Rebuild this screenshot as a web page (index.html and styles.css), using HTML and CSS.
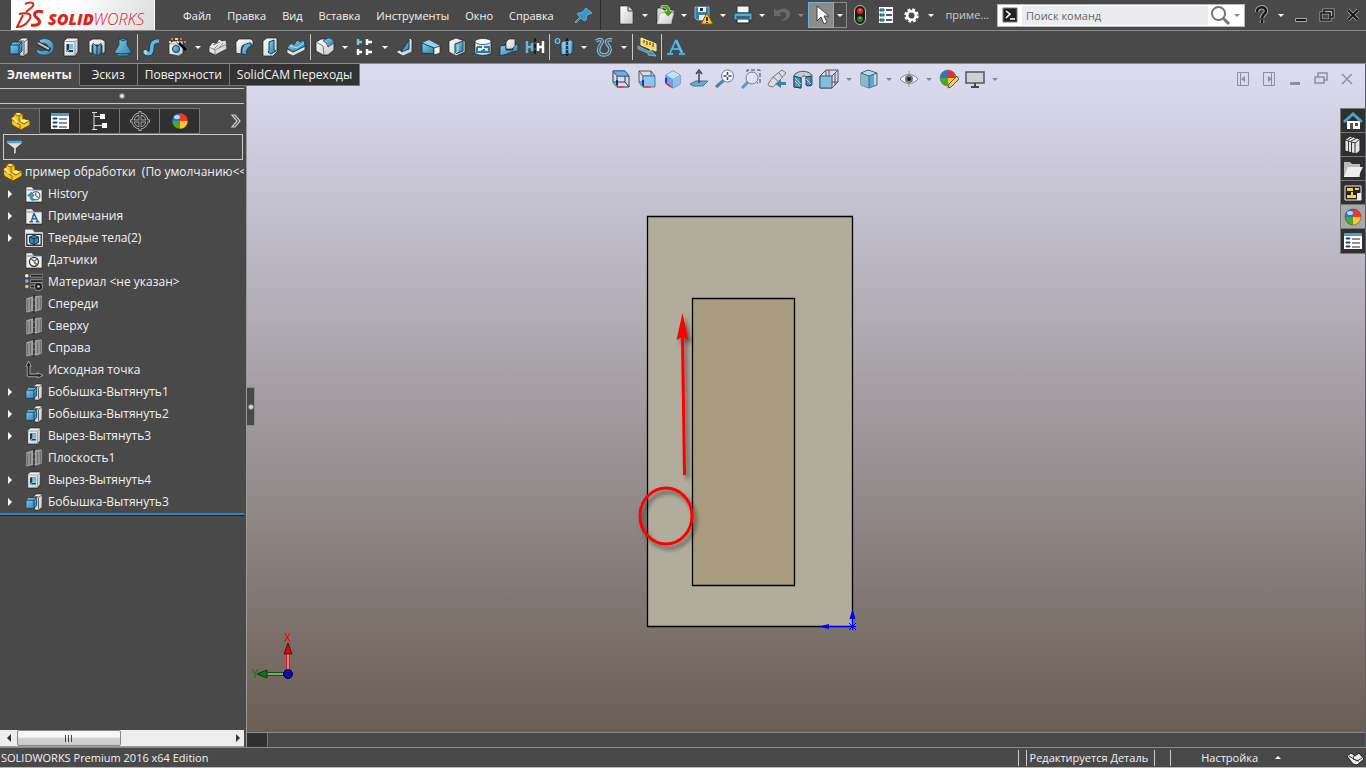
FILE: index.html
```html
<!DOCTYPE html>
<html lang="ru">
<head>
<meta charset="utf-8">
<title>SOLIDWORKS Premium 2016 x64 Edition</title>
<link rel="stylesheet" href="styles.css">
</head>
<body>
<svg class="sprite" aria-hidden="true">
<defs>
<linearGradient id="gb" x1="0" y1="0" x2="1" y2="1"><stop offset="0" stop-color="#8fd0ee"/><stop offset="1" stop-color="#2c7ba6"/></linearGradient>
<linearGradient id="gw" x1="0" y1="0" x2="1" y2="1"><stop offset="0" stop-color="#fff"/><stop offset="1" stop-color="#c4c8ca"/></linearGradient>
</defs>
<symbol id="boss" viewBox="0 0 20 20"><path d="M9 4l4-3h5l1 1v14l-4 3h-4z" fill="url(#gw)" stroke="#222" stroke-width=".7"/><path d="M15 5v13M15 5l4-3M9 4h6" stroke="#555" fill="none"/><path d="M1 8l3-3h9v9l-3 3H1z" fill="url(#gb)" stroke="#123f58"/><path d="M1 8h9v9M10 8l3-3" fill="none" stroke="#123f58"/></symbol>
<symbol id="revolve" viewBox="0 0 20 20"><path d="M4 3c8-4 15 1 15 7 0 7-9 11-17 6l-1-4c6 3 11 2 12-2 0-3-4-5-8-3z" fill="url(#gb)" stroke="#123f58" stroke-width=".8"/><path d="M3 6l12 7" stroke="#222" stroke-width="4"/><path d="M3 6l11 6" stroke="#bbb" stroke-width="2"/></symbol>
<symbol id="cut" viewBox="0 0 20 20"><path d="M3 4l3-3h11v14l-3 4H3z" fill="url(#gw)" stroke="#222" stroke-width=".8"/><path d="M14 5v13M14 5l3-3M3 4.500h11" stroke="#999" fill="none"/><path d="M5.500 7h6.500v8H5.500z" fill="#143e55"/><path d="M8 7h4v6H8z" fill="#74bfe2"/><path d="M5.500 15l3-2.500H12" stroke="#bde2f3" fill="none"/></symbol>
<symbol id="cutrev" viewBox="0 0 20 20"><path d="M2 4l4-2h8l4 2v11l-3 2v-9H5v9l-3-2z" fill="url(#gw)" stroke="#222" stroke-width=".8"/><path d="M6 6l4 4v9l-4-3zM14 6l-4 4v9l4-3z" fill="url(#gb)" stroke="#123f58" stroke-width=".7"/></symbol>
<symbol id="loft" viewBox="0 0 20 20"><path d="M6 2h8v6l5 8-5 3H6l-5-3 5-8z" fill="url(#gb)" stroke="#123f58" stroke-width=".8"/><path d="M6 2l4 2 4-2M1 16l9 1 9-1" stroke="#0e405b" fill="none"/></symbol>
<symbol id="sweep" viewBox="0 0 20 20"><path d="M3 16c8 2 6-2 7-7 0-4 4-5 7-5" fill="none" stroke="#174863" stroke-width="5.500"/><path d="M3 16c8 2 6-2 7-7 0-4 4-5 7-5" fill="none" stroke="#66b6dc" stroke-width="3.500"/><circle cx="3.500" cy="15" r="2" fill="#a6dcf4"/></symbol>
<symbol id="wizard" viewBox="0 0 20 20"><path d="M1 7l4-3h10v12l-4 3-10-2z" fill="url(#gw)" stroke="#222" stroke-width=".7"/><path d="M1 7h10v12M11 7l4-3" fill="none" stroke="#999" stroke-width=".7"/><circle cx="8" cy="12" r="3.500" fill="url(#gb)" stroke="#135"/><path d="M9 4l9 9" stroke="#000" stroke-width="2.500"/><path d="M9 4l2 2" stroke="#fff" stroke-width="2"/><path d="M3 1h2v2H3zM12 1h2v2h-2zM16 4h2v2h-2z" fill="#e67630"/><path d="M7 1h3v2H7zM1 4h2v2H1z" fill="#ffd864"/></symbol>
<symbol id="bumpw" viewBox="0 0 20 20"><path d="M1 10l4-5 3 2 3-5 3 2 4-1 1 9-12 6-6-3z" fill="url(#gw)" stroke="#222" stroke-width=".7"/><path d="M1 10l6 3 12-6M7 13v5M5 8l7-3M5 13l5-5M11 11l4-5" stroke="#888" fill="none"/></symbol>
<symbol id="bumpb" viewBox="0 0 20 20"><path d="M1 12l6 3 12-6v4L7 19l-6-3z" fill="url(#gw)" stroke="#222" stroke-width=".7"/><path d="M1 11l4-5 3 2 3-5 3 2 4-2 1 6-12 6z" fill="url(#gb)" stroke="#123f58" stroke-width=".8"/><path d="M4 9l7 2 7-5" stroke="#b5e4f8" fill="none"/></symbol>
<symbol id="cutsweep" viewBox="0 0 20 20"><path d="M2 5l3-3h12l2 2v4H9c-2 2-2 5-2 9l-5-1z" fill="url(#gw)" stroke="#222" stroke-width=".7"/><path d="M8 17C7 10 10 6 17 6v4c-4 0-5 4-4 8z" fill="url(#gb)" stroke="#123f58"/></symbol>
<symbol id="cutloft" viewBox="0 0 20 20"><path d="M3 4l4-3h10v14l-4 4H3z" fill="url(#gw)" stroke="#222" stroke-width=".7"/><path d="M9 5l5-2v10l2 1-5 3-3-2 1-1z" fill="url(#gb)" stroke="#123f58"/></symbol>
<symbol id="fillet" viewBox="0 0 20 20"><path d="M1 5l5-3h10l3 3v8l-6 5H8l-7-4z" fill="url(#gw)" stroke="#222" stroke-width=".8"/><path d="M8 4l5-3c4 0 6 3 6 5l-6 4c-1-4-3-5-5-6z" fill="url(#gb)" stroke="#123f58" stroke-width=".7"/><path d="M1 5l7 4 1 9" stroke="#777" fill="none"/></symbol>
<symbol id="pattern" viewBox="0 0 20 20"><path d="M3 2v6M3 5h4" stroke="#78bfdf" stroke-width="2.500"/><path d="M12 2v6M12 5h5M3 12v6M3 15h4M12 12v6M12 15h5" stroke="#fff" stroke-width="2.500"/></symbol>
<symbol id="rib" viewBox="0 0 20 20"><path d="M15 1l2 2v12L8 19l-7-4 3-2 3 1z" fill="url(#gw)" stroke="#222" stroke-width=".7"/><path d="M14 3v9l-8 3z" fill="url(#gb)" stroke="#123f58"/></symbol>
<symbol id="draft" viewBox="0 0 20 20"><path d="M1 6l7-3 11 6-6 2H1z" fill="#9ad2ec"/><path d="M1 6l12 5v6L1 16z" fill="url(#gb)" stroke="#123f58"/><path d="M13 11l6-2v7l-6 2z" fill="#f3f3f3" stroke="#222" stroke-width=".7"/></symbol>
<symbol id="shell" viewBox="0 0 20 20"><path d="M2 4l7-3 9 3v11l-9 4-7-4z" fill="url(#gw)" stroke="#222" stroke-width=".7"/><path d="M8 7l8-3v10l-8 3z" fill="url(#gb)" stroke="#123f58"/><path d="M11 8v6l-3 3" stroke="#bbe4f7" fill="none"/></symbol>
<symbol id="wrap" viewBox="0 0 20 20"><path d="M2 5v11c3 3 13 3 16 0V5z" fill="url(#gw)" stroke="#222" stroke-width=".7"/><ellipse cx="10" cy="4.500" rx="8" ry="3" fill="#fff" stroke="#333" stroke-width=".8"/><path d="M4 10h5M4 10v5h5v-2M11 10h5v5h-5v-3" fill="none" stroke="#257caa" stroke-width="2"/></symbol>
<symbol id="intersect" viewBox="0 0 20 20"><path d="M1 9l6-1v5h7V8l5-1v7l-6 1-5 2-7 2z" fill="url(#gb)" stroke="#123f58"/><path d="M7 5l3-3h6v7l-3 3H7z" fill="url(#gw)" stroke="#222" stroke-width=".7"/></symbol>
<symbol id="mirror" viewBox="0 0 20 20"><path d="M2 4v12M2 10h5M7 6v8" stroke="#66b6dc" stroke-width="2.500"/><path d="M18 4v12M18 10h-5M13 6v8" stroke="#fff" stroke-width="2.500"/><path d="M10 1v18" stroke="#111" stroke-width="1.500" stroke-dasharray="4 2"/></symbol>
<symbol id="refgeo" viewBox="0 0 20 20"><circle cx="3.500" cy="4" r="2.500" fill="#276d94" stroke="#9bd0e8"/><path d="M7 5l12-2v13L7 18z" fill="url(#gb)" stroke="#123f58"/><path d="M10 4v13M16 3v14" stroke="#a6dcf4"/><path d="M13 1v18" stroke="#111" stroke-width="1.500" stroke-dasharray="3 1"/></symbol>
<symbol id="curve" viewBox="0 0 20 20"><path d="M2 4c5-3 8-1 5 3-4 5-3 11 3 11s8-6 4-10c-3-4-1-6 4-5" stroke="#a5bac5" stroke-width="3.500" fill="none"/><path d="M2 4c5-3 8-1 5 3-4 5-3 11 3 11s8-6 4-10c-3-4-1-6 4-5" stroke="#246b91" stroke-width="1.500" fill="none"/></symbol>
<symbol id="ruler" viewBox="0 0 20 20"><path d="M4 1l15 6v7L4 8z" fill="#f9d65a" stroke="#fff1b1"/><path d="M7 3v3M10 4v4M13 5v3M16 6v4" stroke="#443a10"/><path d="M1 9l12 6v-3l6 7-8-1v-2L1 12z" fill="#3b8fb9" stroke="#bdd8e5" stroke-width=".6"/></symbol>
<symbol id="letter" viewBox="0 0 20 20"><path d="M10 2l6 14M10 2L4 16M6 12h7M1 17h7M12 17h7" stroke="#225d7d" stroke-width="3.500" fill="none"/><path d="M10 3l6 13" stroke="#6ab9de" stroke-width="2.500"/><path d="M10 3L4 16M6 12h7M1 17h6M13 17h6" stroke="#6ab9de" stroke-width="1.500" fill="none"/></symbol>
<symbol id="pin" viewBox="0 0 20 20"><path d="M12 3l6 5-2 1-3 1-1 5-2 1-3-3-5 5-1-1 5-5-3-3 2-1 4-1 2-3z" fill="#3795c5" stroke="#7dc2e3" stroke-width=".7"/></symbol>
<symbol id="new" viewBox="0 0 20 20"><path d="M4 1h8l5 5v13H4z" fill="url(#gw)" stroke="#222" stroke-width=".6"/><path d="M12 1v5h5" fill="#ddd" stroke="#333"/></symbol>
<symbol id="open" viewBox="0 0 20 20"><path d="M2 3h5l2 2h8v14H2z" fill="#d9d9d9" stroke="#222" stroke-width=".7"/><path d="M5 8h14l-3 11H2z" fill="url(#gw)" stroke="#888" stroke-width=".5"/><path d="M6 1c5-2 9 0 9 5h4l-6 6-5-6h4c0-2-2-4-6-3z" fill="#46a316" stroke="#eaffdf" stroke-width=".6"/></symbol>
<symbol id="save" viewBox="0 0 20 20"><path d="M1 2h14v13H3l-2-2z" fill="#367fa8" stroke="#9dd3ee" stroke-width=".7"/><path d="M4 2h8v5H4zM5 10h7v5H5z" fill="#eee"/><path d="M6 3v3h3V3z" fill="#333"/><path d="M13 8l6 11H7z" fill="#ffc23d" stroke="#875100"/><path d="M13 12v4m0 1v1" stroke="#000" stroke-width="1.500"/></symbol>
<symbol id="print" viewBox="0 0 20 20"><path d="M4 1h12v7H4z" fill="#f5f5f5" stroke="#333"/><path d="M1 8h18v7H1z" fill="#58aad0" stroke="#0f4967"/><path d="M3 12h14M4 14h12v4H4z" fill="#fff" stroke="#123"/></symbol>
<symbol id="undo" viewBox="0 0 20 20"><path d="M2 3v8h8L7 8c5-2 8 0 7 3-1 2-3 4-5 5 6 0 9-3 9-7 0-5-7-8-13-3z" fill="#696969"/></symbol>
<symbol id="arrow" viewBox="0 0 20 20"><path d="M6 1v15l4-4 3 7 3-2-3-6h5z" fill="#fff" stroke="#333" stroke-width=".9"/></symbol>
<symbol id="traffic" viewBox="0 0 20 20"><rect x="4.500" y=".5" width="11" height="19" rx="5.500" fill="#1d1d1d" stroke="#bbb"/><circle cx="10" cy="6" r="3" fill="#e52a11"/><circle cx="10" cy="14" r="3" fill="#238323"/><path d="M9 5h2M9 13h2" stroke="#ffb09b"/></symbol>
<symbol id="list" viewBox="0 0 20 20"><path d="M3 2h14v16H3z" fill="#fff"/><path d="M4 4h4v2H4zM4 9h4v2H4zM4 14h4v2H4z" fill="#5badd2" stroke="#145474"/><path d="M10 5h6M10 10h6M10 15h6" stroke="#222" stroke-width="1.500"/></symbol>
<symbol id="gear" viewBox="0 0 20 20"><circle cx="10" cy="10" r="7" fill="none" stroke="#fff" stroke-width="3" stroke-dasharray="3.300 2.200"/><circle cx="10" cy="10" r="5" fill="none" stroke="#fff" stroke-width="3"/></symbol>
<symbol id="terminal" viewBox="0 0 20 20"><path d="M3 3h14v14H3z" fill="#222" stroke="#777" stroke-width="1"/><path d="M6 6l4 3-4 4M10 14h5" stroke="#fff" stroke-width="1.500" fill="none"/></symbol>
<symbol id="find" viewBox="0 0 20 20"><circle cx="8.500" cy="8.500" r="6.500" fill="#fff" stroke="#757575" stroke-width="2"/><path d="M13 13l6 6" stroke="#757575" stroke-width="3"/></symbol>
<symbol id="help" viewBox="0 0 20 20"><path d="M6 7c0-6 9-6 9-1 0 3-4 3-4 7M11 15v3" stroke="#aaa" stroke-width="4.500" fill="none"/><path d="M6 7c0-6 9-6 9-1 0 3-4 3-4 7M11 15v3" stroke="#161616" stroke-width="2.500" fill="none"/></symbol>
<symbol id="min" viewBox="0 0 20 20"><path d="M4.500 13.500h11v3h-11z" fill="#161616" stroke="#aaa"/></symbol>
<symbol id="restore" viewBox="0 0 20 20"><path d="M7 8V5h9v7h-3M4 8h9v7H4z" fill="none" stroke="#aaa" stroke-width="3"/><path d="M7 8V5h9v7h-3M4 8h9v7H4z" fill="none" stroke="#161616" stroke-width="1.500"/></symbol>
<symbol id="close" viewBox="0 0 20 20"><path d="M5 5l10 10M15 5L5 15" stroke="#aaa" stroke-width="3.500"/><path d="M5 5l10 10M15 5L5 15" stroke="#161616" stroke-width="2"/></symbol>
<symbol id="boxtop" viewBox="0 0 20 20"><path d="M2 2h12l4 5H6zM2 2v11l4 5V7M6 18h12V7M14 2v11H2M14 13l4 5" fill="none" stroke="#33383d"/><path d="M2 2h12l4 5H6z" fill="#72aee6" stroke="#326ea0"/><path d="M6 18v-7" stroke="#00f" stroke-width="1.500"/><path d="M6 18h7" stroke="#f33" stroke-width="1.500"/><path d="M6 18l-4-5" stroke="#29c738" stroke-width="1.500"/></symbol>
<symbol id="boxfront" viewBox="0 0 20 20"><path d="M2 2h12l4 5H6zM2 2v11l4 5V7M14 2v11H2" fill="none" stroke="#555"/><path d="M6 7h12v11H6z" fill="#91c3ef" stroke="#447eb0"/><path d="M6 18v-7" stroke="#00f" stroke-width="1.500"/><path d="M6 18h8" stroke="#f33" stroke-width="1.500"/><path d="M6 18l-4-5" stroke="#29c738" stroke-width="1.500"/></symbol>
<symbol id="iso" viewBox="0 0 20 20"><path d="M10 2l7 4v9l-7 4-7-4V6z" fill="#68a5df" stroke="#3979b5"/><path d="M3 6l7-4 7 4-7 4z" fill="#c4e2f8"/><path d="M10 10l7-4v9l-7 4z" fill="#91bfe9"/><path d="M3 14V9" stroke="#20f" stroke-width="1.500"/><path d="M3 14l5 4" stroke="#f22" stroke-width="1.500"/></symbol>
<symbol id="normal" viewBox="0 0 20 20"><path d="M1 15l6-3h12l-5 5H4z" fill="#69acd0" stroke="#39779b"/><path d="M10 14V3M7 5l3-4 3 4" fill="none" stroke="#444" stroke-width="1.500"/></symbol>
<symbol id="zoomfit" viewBox="0 0 20 20"><path d="M1 18l8-7" stroke="#4e85a7" stroke-width="3"/><circle cx="12.500" cy="7" r="6" fill="#eef4ff" stroke="#767b83"/><path d="M12.500 3v3M12.500 8v3M8.500 7h3M13.500 7h3" stroke="#444" stroke-width="1.500"/></symbol>
<symbol id="zoomarea" viewBox="0 0 20 20"><path d="M6 3V1h13v13h-3" fill="none" stroke="#444" stroke-dasharray="4 2"/><path d="M1 19l7-7" stroke="#5a9abb" stroke-width="3"/><circle cx="11" cy="9" r="6" fill="#dbe8f4" stroke="#767b83"/></symbol>
<symbol id="prev" viewBox="0 0 20 20"><path d="M1 15L6 8l9-7 4 3-7 8-6 6-4-1z" fill="#ddd" stroke="#777"/><path d="M6 8l5 4M12 4l3 4" stroke="#777"/><path d="M19 13h-5v-3l-6 5 6 4v-3h5z" fill="#3986ad"/></symbol>
<symbol id="section" viewBox="0 0 20 20"><path d="M1 6c5-5 13-5 18 0v10l-5 1V8c-3-2-5-1-6 1v10l-7-1z" fill="#c2cbd2" stroke="#555"/><path d="M1 7l7 2v10l-7-1zM13 8l5-1v10l-5-1z" fill="#4b94b9" stroke="#245"/><path d="M2 12l5 5M2 9l6 6M13 10l5 5" stroke="#abd7ee"/></symbol>
<symbol id="orient" viewBox="0 0 20 20"><path d="M1 7l6-6h12v12l-6 6H1zM7 1v12h12M13 7l6-6M10 1v6M16 4v12" fill="none" stroke="#555"/><path d="M1 7h12v12H1z" fill="#85bddb" stroke="#365f75"/></symbol>
<symbol id="shade" viewBox="0 0 20 20"><path d="M2 4l7-3 9 3v12l-8 3-8-3z" fill="#badae9" stroke="#426576"/><path d="M2 4l8 3v12l-8-3z" fill="#89b9cf"/><path d="M10 7l5-2v12l-5 2z" fill="#60a5c9"/><path d="M2 4l8 3 8-3M10 7v12" fill="none" stroke="#426576"/></symbol>
<symbol id="eye" viewBox="0 0 20 20"><path d="M1 10c5-6 13-6 18 0-5 6-13 6-18 0z" fill="#eef0f5" stroke="#888"/><circle cx="10" cy="10" r="4" fill="#70757a"/><path d="M10 2v16" stroke="#999"/><circle cx="10" cy="10" r="2" fill="#222"/></symbol>
<symbol id="ball" viewBox="0 0 20 20"><path d="M10 10V2a8 8 0 0 0-8 8z" fill="#2976cf"/><path d="M10 10h8a8 8 0 0 0-8-8z" fill="#f03a25"/><path d="M10 10H2a8 8 0 0 0 8 8z" fill="#4aa92b"/><path d="M10 18a8 8 0 0 0 8-8h-8z" fill="#ffc72c"/><circle cx="10" cy="10" r="8" fill="none" stroke="#222" stroke-opacity=".4"/><ellipse cx="7" cy="6" rx="3" ry="2" fill="#fff" fill-opacity=".7"/></symbol>
<symbol id="ballpen" viewBox="0 0 20 20"><path d="M9 9V1a8 8 0 0 0-8 8z" fill="#2976cf"/><path d="M9 9h8a8 8 0 0 0-8-8z" fill="#d63431"/><path d="M9 9H1a8 8 0 0 0 8 8z" fill="#4aa92b"/><path d="M9 17a8 8 0 0 0 8-8H9z" fill="#ffc72c"/><circle cx="9" cy="9" r="8" fill="none" stroke="#666" stroke-opacity=".5"/><path d="M9 19l1-4 8-8 2 3-8 8z" fill="#ead073" stroke="#6a5430"/></symbol>
<symbol id="monitor" viewBox="0 0 20 20"><path d="M1 3h18v11H1z" fill="#cfcfd6" stroke="#555" stroke-width="1.500"/><path d="M10 14v3M6 18h8" stroke="#444" stroke-width="2"/></symbol>
<symbol id="part" viewBox="0 0 20 20"><path d="M1 7l3-2V3l4-2 5 2v5l2 1 3-1 2 2v4l-9 5-9-5z" fill="#f5c52f" stroke="#634400"/><path d="M4 3l5 2 4-2M9 5v5l5 3 5-3M1 8l9 6v5" stroke="#8a6500" fill="none"/><path d="M5 3l3-1 3 1-2 1zM10 10l4-2 4 2-4 2zM2 7l2-1 4 5-2 1z" fill="#ffe989"/></symbol>
<symbol id="props" viewBox="0 0 20 20"><path d="M1 2h18v16H1z" fill="#fff"/><path d="M1 2h18v3H1z" fill="#4a9fc7"/><path d="M3 7h4v1H3zM3 11h4v1H3zM3 15h4v1H3z" stroke="#1a5575"/><path d="M9 8h8M9 12h8M9 16h8" stroke="#222"/></symbol>
<symbol id="config" viewBox="0 0 20 20"><path d="M4 1v17M4 5.500h7M4 14.500h8M2 1.500h5M2 18.500h5" stroke="#ddd" fill="none"/><path d="M10 3h5v5h-5zM12 12h5v5h-5z" fill="#fff"/></symbol>
<symbol id="target" viewBox="0 0 20 20"><circle cx="10" cy="10" r="7" fill="none" stroke="#aaa" stroke-width="3"/><path d="M10 0v20M0 10h20" stroke="#aaa" stroke-width="3"/><circle cx="10" cy="10" r="7" fill="none" stroke="#222" stroke-width="1.200"/><path d="M10 1v18M1 10h18" stroke="#222" stroke-width="1.200"/></symbol>
<symbol id="chev" viewBox="0 0 20 20"><path d="M6 4h3l5 6-5 6H6l5-6z" stroke="#ccc" stroke-width="1.200" fill="none"/></symbol>
<symbol id="funnel" viewBox="0 0 20 20"><path d="M1 2h18v3l-7 6v5l-3 3v-8L1 5z" fill="#ddd" stroke="#222" stroke-width=".8"/><path d="M1 2h18v3H1z" fill="#4ca8d3"/></symbol>
<symbol id="folder" viewBox="0 0 20 20"><path d="M1 2h7l2 3h9v14H1z" fill="#ededed" stroke="#222" stroke-width=".8"/><path d="M2 5.500h16" stroke="#777"/></symbol>
<symbol id="history" viewBox="0 0 20 20"><use href="#folder"/><circle cx="12" cy="12" r="4.500" fill="none" stroke="#333"/><path d="M12 9v3l3 2" stroke="#333" fill="none"/><path d="M10 17c-4 0-5-2-4-5H3l4-4 3 4H8" stroke="#2577a0" fill="#3c9bc9"/></symbol>
<symbol id="notes" viewBox="0 0 20 20"><use href="#folder"/><path d="M10 7l4 9M10 7l-3 9M8 13h4M5 16.500h4M12 16.500h4" stroke="#206d96" stroke-width="1.700" fill="none"/></symbol>
<symbol id="bodies" viewBox="0 0 20 20"><path d="M.5 1h8l2 3h9v15.500H.5z" fill="#eee" stroke="#ddd"/><path d="M2 6h16v12H2z" fill="#e8e8e8" stroke="#333" stroke-width="1.500"/><path d="M10 7l5 2v6l-5 2.500L5 15V9z" fill="#3388b0" stroke="#124"/><path d="M5 9l5 2 5-2M10 11v6" stroke="#124" fill="none"/></symbol>
<symbol id="sensor" viewBox="0 0 20 20"><use href="#folder"/><circle cx="10" cy="12" r="5" fill="#fff" stroke="#333" stroke-width="1.500"/><path d="M7 9l3 2M10 12l3-3" stroke="#287ead" stroke-width="1.500"/><path d="M10 12l3 3" stroke="#e44724" stroke-width="2"/></symbol>
<symbol id="material" viewBox="0 0 20 20"><path d="M6 1.500h14v3H6zM6 7.500h14v3H6zM6 13.500h8v3H6z" fill="#242424" stroke="#aaa" stroke-width=".8"/><circle cx="2" cy="3" r="2" fill="#eee"/><circle cx="2" cy="9" r="2" fill="#63bde5"/><circle cx="2" cy="15" r="2" fill="#f7c430"/><circle cx="15" cy="15" r="4.500" fill="#222" stroke="#bbb" stroke-width=".8"/><circle cx="15" cy="15" r="1.500" fill="#ccc"/></symbol>
<symbol id="plane" viewBox="0 0 20 20"><path d="M2 4l7-2v15l-7 2zM11 2l7-1v15l-7 2z" fill="#999" stroke="#bbb" stroke-width=".8"/><path d="M3 5v13M17 2v14M6 4v13M14 3v13" stroke="#555" stroke-width=".8"/><path d="M10 0v20" stroke="#222" stroke-width="1.500" stroke-dasharray="5 1"/></symbol>
<symbol id="origin" viewBox="0 0 20 20"><path d="M4 17V5M3 16h12" stroke="#aaa" stroke-width="4"/><path d="M4 0l3 6H1zM20 16l-6-3v6z" fill="#222" stroke="#aaa"/><path d="M4 17V5M3 16h12" stroke="#222" stroke-width="2"/></symbol>
<symbol id="home" viewBox="0 0 20 20"><path d="M4 10h13v8H4z" fill="#fff"/><path d="M1 11l9-8 9 8" fill="none" stroke="#49a5d0" stroke-width="3"/><path d="M7 12h3v6H7zM12 12h3v3h-3z" fill="#555"/></symbol>
<symbol id="books" viewBox="0 0 20 20"><path d="M2 5l5-4 10 3v12l-4 3-11-3z" fill="#e6e6e6" stroke="#222"/><path d="M2 5l10 3 5-4M5.500 6v11M8.500 7v11M12 8v11M5 5l5-3M8 6l6-3" fill="none" stroke="#333"/></symbol>
<symbol id="dir" viewBox="0 0 20 20"><path d="M1 3h6l2 2h8v13H1z" fill="#bbb"/><path d="M5 8h15l-5 10H1z" fill="#eee"/></symbol>
<symbol id="palette" viewBox="0 0 20 20"><path d="M2 3h16v14H2z" fill="#222" stroke="#eee"/><path d="M4 5h6v3H4zM12 5h4v2h-4zM8 9h2v3H8zM4 12h9v3H4z" fill="#f8cf45"/><path d="M14 10h4v7h-4z" fill="#eee"/></symbol>
<symbol id="paneleft" viewBox="0 0 20 20"><path d="M4.500 3.500h11v13h-11zM7.500 3.500v13" fill="none" stroke="#8f8f9d"/><path d="M12 7v6l-4-3z" fill="#8f8f9d"/></symbol>
<symbol id="paneright" viewBox="0 0 20 20"><path d="M4.500 3.500h11v13h-11zM12.500 3.500v13" fill="none" stroke="#8f8f9d"/><path d="M9 7v6l4-3z" fill="#8f8f9d"/></symbol>
<symbol id="dmin" viewBox="0 0 20 20"><path d="M5 13h10v3H5z" fill="#8f8f9d"/></symbol>
<symbol id="drestore" viewBox="0 0 20 20"><path d="M7 8V4h9v7h-3M4 8h9v6H4z" fill="none" stroke="#8f8f9d" stroke-width="1.500"/></symbol>
<symbol id="dclose" viewBox="0 0 20 20"><path d="M5 5l10 10M15 5L5 15" stroke="#8f8f9d" stroke-width="1.500"/></symbol>
<symbol id="tags" viewBox="0 0 20 20"><path d="M2 8l4-3 4 3 4-3 5 6-7 6-4-1z" fill="#eee" stroke="#222"/><path d="M4 8l8 5 5-3M9 8l-1 3 6 2" stroke="#333" fill="none"/></symbol>
</svg>

<div class="app">
<header class="title">
  <div class="logo">
    <svg class="ds" viewBox="0 0 30 28" aria-hidden="true"><path d="M9 3c6-3 11-1 7 3L10 11M3 13c9-2 14 0 10 6-3 5-7 7-12 7l6-12" fill="none" stroke="#dc2419" stroke-width="2"/><path d="M27 11c-6-2-10 1-8 4l4 4c2 4-2 6-8 5" fill="none" stroke="#dc2419" stroke-width="3"/></svg>
    <span class="brand"><b>SOLID</b>WORKS</span>
  </div>
  <nav class="menu"><button>Файл</button><button>Правка</button><button>Вид</button><button>Вставка</button><button>Инструменты</button><button>Окно</button><button>Справка</button></nav>
  <button class="pin" aria-label="Закрепить"><svg class="ic"><use href="#pin"/></svg></button>
  <div class="quick">
    <button class="t" aria-label="Создать"><svg class="ic"><use href="#new"/></svg></button><button class="c" aria-label="Варианты создания"></button>
    <button class="t" aria-label="Открыть"><svg class="ic"><use href="#open"/></svg></button><button class="c" aria-label="Варианты открытия"></button>
    <button class="t" aria-label="Сохранить"><svg class="ic"><use href="#save"/></svg></button><button class="c" aria-label="Варианты сохранения"></button>
    <button class="t" aria-label="Печать"><svg class="ic"><use href="#print"/></svg></button><button class="c" aria-label="Варианты печати"></button>
    <button class="t" aria-label="Отменить"><svg class="ic"><use href="#undo"/></svg></button><button class="c dim" aria-label="Варианты отмены"></button>
    <button class="t sel" aria-label="Выбрать"><svg class="ic"><use href="#arrow"/></svg></button><button class="c selc" aria-label="Варианты выбора"></button>
    <button class="t" aria-label="Перестроить"><svg class="ic"><use href="#traffic"/></svg></button>
    <button class="t" aria-label="Свойства файла"><svg class="ic"><use href="#list"/></svg></button>
    <button class="t" aria-label="Параметры"><svg class="ic gear"><use href="#gear"/></svg></button><button class="c" aria-label="Настройка параметров"></button>
  </div>
  <span class="doc">приме...</span>
  <form class="search">
    <svg class="ic"><use href="#terminal"/></svg>
    <input type="text" placeholder="Поиск команд" aria-label="Поиск команд">
    <button type="button" class="find" aria-label="Найти"><svg class="ic"><use href="#find"/></svg></button><button type="button" class="c gray" aria-label="Область поиска"></button>
  </form>
  <div class="win">
    <button class="t" aria-label="Справка"><svg class="ic"><use href="#help"/></svg></button><button class="c" aria-label="Меню справки"></button>
    <button class="t" aria-label="Свернуть"><svg class="ic"><use href="#min"/></svg></button>
    <button class="t" aria-label="Восстановить"><svg class="ic"><use href="#restore"/></svg></button>
    <button class="t" aria-label="Закрыть"><svg class="ic"><use href="#close"/></svg></button>
  </div>
</header>

<div class="tools" role="toolbar">
  <button class="t" aria-label="Вытянутая бобышка"><svg class="ic"><use href="#boss"/></svg></button>
  <button class="t" aria-label="Повернутая бобышка"><svg class="ic"><use href="#revolve"/></svg></button>
  <button class="t" aria-label="Вытянутый вырез"><svg class="ic"><use href="#cut"/></svg></button>
  <button class="t" aria-label="Повернутый вырез"><svg class="ic"><use href="#cutrev"/></svg></button>
  <button class="t" aria-label="По сечениям"><svg class="ic"><use href="#loft"/></svg></button>
  <i class="sep"></i>
  <button class="t" aria-label="По траектории"><svg class="ic"><use href="#sweep"/></svg></button>
  <button class="t" aria-label="Отверстие под крепеж"><svg class="ic"><use href="#wizard"/></svg></button><button class="c" aria-label="Варианты отверстий"></button>
  <button class="t" aria-label="Бобышка на границе"><svg class="ic"><use href="#bumpw"/></svg></button>
  <button class="t" aria-label="Вырез по траектории"><svg class="ic"><use href="#cutsweep"/></svg></button>
  <button class="t" aria-label="Вырез по сечениям"><svg class="ic"><use href="#cutloft"/></svg></button>
  <button class="t" aria-label="Вырез на границе"><svg class="ic"><use href="#bumpb"/></svg></button>
  <i class="sep"></i>
  <button class="t" aria-label="Скругление"><svg class="ic"><use href="#fillet"/></svg></button><button class="c" aria-label="Варианты скругления"></button>
  <button class="t" aria-label="Линейный массив"><svg class="ic"><use href="#pattern"/></svg></button><button class="c" aria-label="Варианты массива"></button>
  <button class="t" aria-label="Ребро"><svg class="ic"><use href="#rib"/></svg></button>
  <button class="t" aria-label="Уклон"><svg class="ic"><use href="#draft"/></svg></button>
  <button class="t" aria-label="Оболочка"><svg class="ic"><use href="#shell"/></svg></button>
  <button class="t" aria-label="Перенос"><svg class="ic"><use href="#wrap"/></svg></button>
  <button class="t" aria-label="Пересечение"><svg class="ic"><use href="#intersect"/></svg></button>
  <button class="t" aria-label="Зеркало"><svg class="ic"><use href="#mirror"/></svg></button>
  <i class="sep"></i>
  <button class="t" aria-label="Справочная геометрия"><svg class="ic"><use href="#refgeo"/></svg></button><button class="c" aria-label="Варианты геометрии"></button>
  <button class="t" aria-label="Кривые"><svg class="ic"><use href="#curve"/></svg></button><button class="c" aria-label="Варианты кривых"></button>
  <i class="sep"></i>
  <button class="t" aria-label="Instant3D"><svg class="ic"><use href="#ruler"/></svg></button>
  <i class="sep"></i>
  <button class="t" aria-label="Текст"><svg class="ic"><use href="#letter"/></svg></button>
</div>

<div class="work">
  <nav class="tabs"><button class="on">Элементы</button><button>Эскиз</button><button>Поверхности</button><button>SolidCAM Переходы</button></nav>
  <aside class="side">
    <div class="grip"><i class="dot"></i></div>
    <div class="ptabs">
      <button class="on" aria-label="Дерево конструирования"><svg class="ic"><use href="#part"/></svg></button>
      <button aria-label="Свойства"><svg class="ic"><use href="#props"/></svg></button>
      <button aria-label="Конфигурации"><svg class="ic"><use href="#config"/></svg></button>
      <button aria-label="Размеры"><svg class="ic"><use href="#target"/></svg></button>
      <button aria-label="Отображение"><svg class="ic"><use href="#ball"/></svg></button>
      <button class="more" aria-label="Еще"><svg class="ic"><use href="#chev"/></svg></button>
    </div>
    <label class="filter"><svg class="funnel"><use href="#funnel"/></svg><input type="text" aria-label="Фильтр"></label>
    <div class="root"><svg class="ic"><use href="#part"/></svg><span>пример обработки&nbsp; (По умолчанию&lt;&lt;П</span></div>
    <ul class="tree">
      <li class="x"><svg><use href="#history"/></svg>History</li>
      <li class="x"><svg><use href="#notes"/></svg>Примечания</li>
      <li class="x"><svg><use href="#bodies"/></svg>Твердые тела(2)</li>
      <li><svg><use href="#sensor"/></svg>Датчики</li>
      <li><svg><use href="#material"/></svg>Материал &lt;не указан&gt;</li>
      <li><svg><use href="#plane"/></svg>Спереди</li>
      <li><svg><use href="#plane"/></svg>Сверху</li>
      <li><svg><use href="#plane"/></svg>Справа</li>
      <li><svg><use href="#origin"/></svg>Исходная точка</li>
      <li class="x"><svg><use href="#boss"/></svg>Бобышка-Вытянуть1</li>
      <li class="x"><svg><use href="#boss"/></svg>Бобышка-Вытянуть2</li>
      <li class="x"><svg><use href="#cut"/></svg>Вырез-Вытянуть3</li>
      <li><svg><use href="#plane"/></svg>Плоскость1</li>
      <li class="x"><svg><use href="#cut"/></svg>Вырез-Вытянуть4</li>
      <li class="x"><svg><use href="#boss"/></svg>Бобышка-Вытянуть3</li>
    </ul>
    <div class="rollback"></div>
    <div class="hscroll"><button class="sl" aria-label="Влево"></button><span class="thumb"><i></i><i></i><i></i></span><button class="sr" aria-label="Вправо"></button></div>
  </aside>
  <main class="view">
    <div class="canvas">
      <div class="hud">
        <button class="t" aria-label="Сверху"><svg class="ic"><use href="#boxtop"/></svg></button>
        <button class="t" aria-label="Спереди"><svg class="ic"><use href="#boxfront"/></svg></button>
        <button class="t" aria-label="Изометрия"><svg class="ic"><use href="#iso"/></svg></button>
        <button class="t" aria-label="Перпендикулярно"><svg class="ic"><use href="#normal"/></svg></button>
        <button class="t" aria-label="Во весь экран"><svg class="ic"><use href="#zoomfit"/></svg></button>
        <button class="t" aria-label="Увеличить область"><svg class="ic"><use href="#zoomarea"/></svg></button>
        <button class="t" aria-label="Предыдущий вид"><svg class="ic"><use href="#prev"/></svg></button>
        <button class="t" aria-label="Разрез"><svg class="ic"><use href="#section"/></svg></button>
        <button class="t" aria-label="Ориентация"><svg class="ic"><use href="#orient"/></svg></button><button class="c gray" aria-label="Варианты ориентации"></button>
        <button class="t" aria-label="Стиль отображения"><svg class="ic"><use href="#shade"/></svg></button><button class="c gray" aria-label="Варианты стиля"></button>
        <button class="t" aria-label="Скрыть объекты"><svg class="ic"><use href="#eye"/></svg></button><button class="c gray" aria-label="Варианты скрытия"></button>
        <button class="t" aria-label="Внешний вид"><svg class="ic"><use href="#ballpen"/></svg></button>
        <button class="t" aria-label="Параметры вида"><svg class="ic"><use href="#monitor"/></svg></button><button class="c gray" aria-label="Варианты вида"></button>
      </div>
      <div class="docwin">
        <button class="t" aria-label="Левая панель"><svg class="ic"><use href="#paneleft"/></svg></button>
        <button class="t" aria-label="Правая панель"><svg class="ic"><use href="#paneright"/></svg></button>
        <button class="t" aria-label="Свернуть документ"><svg class="ic"><use href="#dmin"/></svg></button>
        <button class="t" aria-label="Восстановить документ"><svg class="ic"><use href="#drestore"/></svg></button>
        <button class="t" aria-label="Закрыть документ"><svg class="ic"><use href="#dclose"/></svg></button>
      </div>
      <svg class="model" width="240" height="430" viewBox="630 210 240 430" role="img" aria-label="Модель детали">
        <defs><filter id="sh" x="-50%" y="-20%" width="200%" height="140%"><feDropShadow dx="3" dy="4" stdDeviation="2" flood-color="#000" flood-opacity=".5"/></filter></defs>
        <path d="M647.500 216.500h205v410h-205z" fill="#b2ac9c" stroke="#000" stroke-width="1.300"/>
        <path d="M692.500 298.500h102v287h-102z" fill="#a99c7e" stroke="#000" stroke-width="1.300"/>
        <g filter="url(#sh)"><path d="M682.500 335l2 140" stroke="#f00" stroke-width="3"/><path d="M682.500 313l6 27-6-3-6 3z" fill="#f00"/></g>
        <ellipse cx="666" cy="516" rx="26" ry="28" fill="none" stroke="#f00" stroke-width="3" filter="url(#sh)"/>
        <path d="M852.500 626.500v-9M852.500 626.500h-24M849 623l7 7M856 623l-7 7M856 626.500h-4M852.500 630v-4" stroke="#00f" fill="none"/><path d="M852.500 609l3 10h-6zM819 626.500l10-2.500v5z" fill="#00f"/>
      </svg>
      <svg class="triad" width="44" height="50" viewBox="250 631 44 50" aria-hidden="true">
        <path d="M288 673v-20" stroke="#c22" stroke-width="4"/><path d="M288 673v-20" stroke="#f77" stroke-width="2"/><path d="M288 643l4 11h-8z" fill="#c81414" stroke="#700"/>
        <path d="M287 674h-20" stroke="#174d17" stroke-width="4"/><path d="M287 674h-20" stroke="#74ad74" stroke-width="2"/><path d="M257 674l10-4v8z" fill="#187318" stroke="#063c06"/>
        <circle cx="288" cy="674" r="4.500" fill="#0b0ba8" stroke="#003"/>
        <text x="284" y="642" fill="#f00">X</text><text x="251" y="678" fill="#008000">Y</text>
      </svg>
      <button class="handle" aria-label="Свернуть панель"><i class="dot"></i></button>
      <nav class="rail">
        <button aria-label="Ресурсы"><svg class="ic"><use href="#home"/></svg></button>
        <button aria-label="Библиотека"><svg class="ic"><use href="#books"/></svg></button>
        <button aria-label="Проводник"><svg class="ic"><use href="#dir"/></svg></button>
        <button aria-label="Палитра видов"><svg class="ic"><use href="#palette"/></svg></button>
        <button class="on" aria-label="Внешние виды"><svg class="ic"><use href="#ball"/></svg></button>
        <button aria-label="Свойства"><svg class="ic"><use href="#props"/></svg></button>
      </nav>
    </div>
    <div class="sheet"><i></i></div>
  </main>
</div>

<footer class="status">
  <span class="edition">SOLIDWORKS Premium 2016 x64 Edition</span>
  <span class="gapcell"></span>
  <span class="mode">Редактируется Деталь</span>
  <button class="custom">Настройка<i></i></button>
  <button class="tag" aria-label="Теги"><svg class="ic"><use href="#tags"/></svg></button>
</footer>
</div>
</body>
</html>
```

FILE: styles.css
```css
* { box-sizing: border-box; }
html, body { height: 100%; margin: 0; }
body { font: 12px/16px "Open Sans", "Noto Sans", sans-serif; color: #f2f2f2; background: #494949; overflow: hidden; }
button { font: inherit; color: inherit; background: none; border: 0; padding: 0; margin: 0; }
input { font: inherit; border: 0; outline: 0; min-width: 0; }
.sprite { position: absolute; width: 0; height: 0; }
.ic { width: 20px; height: 20px; display: block; flex: none; }

.app { height: 100vh; display: flex; flex-direction: column; border-bottom: 1px solid #a9bccd; }

/* icon cells and drop-down carets */
.t { width: 26px; height: 26px; display: flex; align-items: center; justify-content: center; flex: none; }
.c { width: 14px; height: 26px; display: flex; align-items: center; justify-content: center; flex: none; }
.c::after { content: ""; border: 3px solid transparent; border-top-color: #fff; border-bottom: 0; }
.c.gray::after { border-top-color: #85858f; }
.c.dim::after { border-top-color: #8a8a8a; }

/* title bar */
.title { height: 31px; flex: none; display: flex; align-items: center; border-bottom: 1px solid #8a8a8a; font-size: 11px; }
.logo { width: 144px; height: 30px; margin-left: 11px; padding: 0 5px; flex: none; display: flex; align-items: center; background: linear-gradient(120deg, #fff 40%, #d9dbdd); color: #dc2419; border-right: 1px solid #fff; }
.ds { width: 30px; height: 28px; flex: none; }
.brand { font: italic 300 16px/20px "Open Sans", sans-serif; padding-top: 8px; margin-left: 2px; }
.brand b { font-weight: 800; }
.menu { display: flex; margin-left: 20px; }
.menu button { padding: 2px 8px 0; height: 30px; white-space: nowrap; }
.pin { margin-left: auto; padding: 0 6px; }
.quick { display: flex; align-items: center; height: 30px; border-left: 1px solid #2c2c2c; padding-left: 12px; }
.quick .c { width: 13px; }
.quick .sel { background: #8b8b8b; border: 1px solid #6fb1d5; }
.quick .selc { border: 1px solid #8b8b8b; border-left: 0; }
.title .gear { width: 17px; height: 17px; }
.doc { margin: 0 8px; color: #ccc; }
.search { width: 248px; height: 23px; flex: none; display: flex; align-items: center; background: #fff; border: 1px solid #bbb; padding-left: 2px; }
.search input { flex: 1; height: 19px; background: #ebecf0; color: #555; padding: 0 4px; margin: 0 2px; }
.search input::placeholder { color: #666; opacity: 1; }
.win { display: flex; align-items: center; padding-left: 3px; }

/* feature toolbar */
.tools { height: 33px; flex: none; display: flex; align-items: center; padding-left: 6px; border-bottom: 1px solid #8a8a8a; }
.sep { width: 1px; height: 26px; margin: 0 1px; background: #c8c8c8; }

.work { flex: 1; min-height: 0; display: flex; position: relative; }
.tabs { position: absolute; left: 0; top: 0; z-index: 2; display: flex; height: 22px; }
.tabs button { background: #333; border: 1px solid #777; border-width: 0 1px 1px 0; padding: 0 7px; height: 22px; white-space: nowrap; }
.tabs button:nth-child(2) { padding: 0 12px; }
.tabs .on { background: #494949; font-weight: 700; border-bottom-color: #494949; }

/* feature manager */
.side { width: 247px; flex: none; display: flex; flex-direction: column; padding-top: 22px; border-right: 1px solid #999; }
.grip { height: 16px; margin: 2px 2px 0 0; border: 1px solid #c5c5c5; border-width: 1px 0; display: flex; align-items: center; justify-content: center; flex: none; }
.dot { width: 6px; height: 6px; border-radius: 50%; background: #ddd; border: 1px solid #777; }
.ptabs { display: flex; margin-top: 4px; height: 26px; flex: none; }
.ptabs button { width: 40px; display: flex; align-items: center; justify-content: center; background: #303030; border: 1px solid #777; border-left: 0; }
.ptabs .on { background: #494949; border-bottom-color: #494949; }
.ptabs .more { background: none; border: 0; margin-left: auto; width: 20px; }
.filter { display: flex; align-items: center; margin: 0 3px; height: 26px; flex: none; border: 1px solid #ccc; padding: 0 2px; }
.filter input { flex: 1; background: none; color: inherit; }
.funnel { width: 17px; height: 17px; }
.root { display: flex; align-items: center; gap: 3px; height: 22px; margin: 1px 2px 0 0; padding-left: 2px; overflow: hidden; white-space: nowrap; flex: none; }
.tree { list-style: none; margin: 0; padding: 0; }
.tree li { display: flex; align-items: center; gap: 5px; height: 22px; padding-left: 25px; white-space: nowrap; }
.tree li.x { padding-left: 8px; }
.tree li.x::before { content: ""; border: 4px solid transparent; border-left-color: #fff; border-right: 0; margin-right: 8px; }
.tree svg { width: 18px; height: 18px; }
.rollback { height: 3px; margin-right: 2px; background: #2d85d0; border-bottom: 1px solid #2200b0; flex: none; }
.hscroll { margin: auto 2px 0 0; height: 17px; background: #ededed; border-bottom: 1px solid #999; display: flex; flex: none; }
.hscroll button { width: 17px; display: flex; align-items: center; justify-content: center; }
.hscroll button::after { content: ""; border: 4px solid transparent; }
.hscroll .sl::after { border-left: 0; border-right-color: #333; }
.hscroll .sr { width: 13px; margin-left: auto; }
.hscroll .sr::after { border-right: 0; border-left-color: #333; }
.thumb { width: 104px; display: flex; align-items: center; justify-content: center; gap: 1px; border: 1px solid #888; border-radius: 2px; background: linear-gradient(#f6f6f6 45%, #d2d2d4 50%, #c9c9cc); }
.thumb i { width: 2px; height: 7px; border-left: 1px solid #444; }

/* graphics area */
.view { flex: 1; min-width: 0; display: flex; flex-direction: column; border-right: 1px solid #52636b; }
.canvas { flex: 1; position: relative; background: linear-gradient(#dcdcf1, #6b5e53); }
.hud { display: flex; justify-content: center; padding: 2px 2px 0 0; }
.docwin { position: absolute; right: 5px; top: 2px; display: flex; }
.model { position: absolute; left: 383px; top: 146px; }
.triad { position: absolute; left: 3px; bottom: 51px; font: 12px/12px "DejaVu Sans Mono", monospace; }
.handle { position: absolute; left: 0; top: 323px; width: 8px; height: 39px; background: #494949; border: 1px solid #8a8a8a; border-left: 0; display: flex; align-items: center; justify-content: center; }
.rail { position: absolute; right: 0; top: 44px; width: 25px; display: flex; flex-direction: column; border: 1px solid #777; border-right: 0; }
.rail button { height: 24px; background: #303030; border-bottom: 1px solid #777; display: flex; align-items: center; justify-content: center; }
.rail button:last-child { border-bottom: 0; }
.rail .on { background: #a8a8a8; }
.sheet { height: 15px; flex: none; border-top: 1px solid #8a8a8a; background: #494949; }
.sheet i { display: block; width: 21px; height: 14px; background: #303030; border-right: 1px solid #777; }

/* status bar */
.status { height: 20px; flex: none; display: flex; align-items: center; border-top: 1px solid #8a8a8a; padding-left: 1px; white-space: nowrap; font-size: 11px; }
.edition { margin-right: auto; }
.gapcell { width: 9px; height: 16px; border: 1px solid #ccc; border-width: 0 1px; }
.mode { padding: 0 6px 0 3px; border-right: 1px solid #ccc; }
.custom { margin-left: 15px; padding-left: 30px; border-left: 1px solid #ccc; display: flex; align-items: center; gap: 17px; }
.custom i { border: 3px solid transparent; border-bottom-color: #fff; border-top: 0; }
.tag { margin: 0 1px 0 64px; }
```
